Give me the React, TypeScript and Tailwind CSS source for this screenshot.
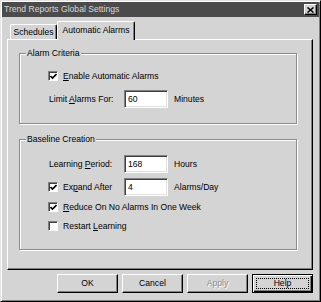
import React from 'react';

const font = "font-['Liberation_Sans',Arial,sans-serif] text-[8.6px] leading-none text-black";

const Check = ({ checked }: { checked?: boolean }) => (
  <span className="w-[10px] h-[10px] shrink-0 bg-white border border-t-[#808080] border-l-[#808080] border-r-white border-b-white shadow-[inset_1px_1px_0_#404040] flex items-center justify-center">
    {checked && (
      <svg width="7" height="7" viewBox="0 0 7 7">
        <path d="M0.5 3 L2.5 5 L6.5 1" stroke="#000" strokeWidth="1.6" fill="none" />
      </svg>
    )}
  </span>
);

const Field = ({ value }: { value: string }) => (
  <div className="w-[44px] h-[18px] bg-white border border-t-[#808080] border-l-[#808080] border-r-white border-b-white shadow-[inset_1px_1px_0_#404040,inset_-1px_-1px_0_#dfdfdf] flex items-center pl-[3px]">
    {value}
  </div>
);

// label with one underlined mnemonic letter
const Mn = ({ pre = '', u, post = '' }: { pre?: string; u: string; post?: string }) => (
  <span className="whitespace-nowrap">
    {pre}
    <span className="underline underline-offset-[1px]">{u}</span>
    {post}
  </span>
);

const GroupBox = ({ title, className, children }: { title: string; className: string; children: React.ReactNode }) => (
  <div className={`relative border border-[#8c8c8c] shadow-[inset_1px_1px_0_#fff,1px_1px_0_#fff] ${className}`}>
    <span className="absolute -top-[5px] left-[6px] bg-[#d4d4d4] px-[1px]">{title}</span>
    {children}
  </div>
);

const Button = ({ label, disabled, isDefault }: { label: string; disabled?: boolean; isDefault?: boolean }) => (
  <div
    className={`w-[61px] h-[19px] flex items-center justify-center ${
      isDefault
        ? 'border border-black shadow-[inset_1px_1px_0_#fff,inset_-1px_-1px_0_#000,inset_-2px_-2px_0_#808080]'
        : 'border border-t-white border-l-white border-r-black border-b-black shadow-[inset_-1px_-1px_0_#808080]'
    }`}
  >
    {isDefault ? (
      <span className="w-[53px] h-[11px] border border-dotted border-black flex items-center justify-center">{label}</span>
    ) : (
      <span className={disabled ? 'text-[#8a8a8a] [text-shadow:1px_1px_0_#fff]' : ''}>{label}</span>
    )}
  </div>
);

export default function App() {
  return (
    <div className={`${font} w-[321px] h-[302px] bg-[#d4d4d4] border border-t-[#e4e4e4] border-l-[#e4e4e4] border-r-black border-b-black shadow-[inset_1px_1px_0_#fff,inset_-1px_-1px_0_#808080] p-[1px] flex flex-col`}>
      {/* title bar */}
      <div className="h-[15px] bg-[#4b4b4b] flex items-center justify-between pl-[2px] pr-[2px]">
        <span className="text-[#dadada]">Trend Reports Global Settings</span>
        <div className="w-[13px] h-[11px] bg-[#d4d4d4] border border-t-white border-l-white border-r-black border-b-black shadow-[inset_-1px_-1px_0_#808080] flex items-center justify-center">
          <svg width="7" height="6" viewBox="0 0 7 6">
            <path d="M0.5 0.5 L6.5 5.5 M6.5 0.5 L0.5 5.5" stroke="#000" strokeWidth="1.5" />
          </svg>
        </div>
      </div>

      <div className="ml-[5px] mr-[6px] mt-[4px] flex flex-col">
        {/* tabs */}
        <div className="relative z-10 -mb-[1px] flex items-end h-[19px] pl-[3px]">
          <div className="w-[47px] h-[15px] mb-[1px] border-t border-l border-t-white border-l-white border-r border-r-black rounded-t-[2px] shadow-[inset_-1px_0_0_#808080] flex items-center justify-center pt-[1px]">
            Schedules
          </div>
          <div className="w-[78px] h-[19px] bg-[#d4d4d4] border-t border-l border-t-white border-l-white border-r border-r-black rounded-t-[2px] shadow-[inset_-1px_0_0_#808080] flex items-center justify-center pb-[2px]">
            Automatic Alarms
          </div>
        </div>

        {/* panel */}
        <div className="h-[231px] border border-t-white border-l-white border-r-black border-b-black shadow-[inset_-1px_-1px_0_#808080] pl-[11px] pr-[15px] pt-[13px] flex flex-col">
          <GroupBox title="Alarm Criteria" className="h-[71px] pl-[28px] pt-[17px] flex flex-col">
            <div className="flex items-center h-[10px] gap-[5px]">
              <Check checked />
              <Mn u="E" post="nable Automatic Alarms" />
            </div>
            <div className="flex items-center mt-[9px]">
              <div className="w-[76px] pl-[1px]">
                <Mn pre="Limit " u="A" post="larms For:" />
              </div>
              <Field value="60" />
              <span className="ml-[6px]">Minutes</span>
            </div>
          </GroupBox>

          <GroupBox title="Baseline Creation" className="mt-[15px] h-[111px] pl-[28px] pt-[15px] flex flex-col">
            <div className="flex items-center">
              <div className="w-[76px] pl-[1px]">
                <Mn pre="Learning " u="P" post="eriod:" />
              </div>
              <Field value="168" />
              <span className="ml-[6px]">Hours</span>
            </div>
            <div className="flex items-center mt-[5px]">
              <div className="w-[76px] flex items-center gap-[5px]">
                <Check checked />
                <Mn pre="Ex" u="p" post="and After" />
              </div>
              <Field value="4" />
              <span className="ml-[6px]">Alarms/Day</span>
            </div>
            <div className="flex items-center h-[10px] gap-[5px] mt-[6px]">
              <Check checked />
              <Mn u="R" post="educe On No Alarms In One Week" />
            </div>
            <div className="flex items-center h-[10px] gap-[5px] mt-[9px]">
              <Check />
              <Mn pre="Restart " u="L" post="earning" />
            </div>
          </GroupBox>
        </div>

        {/* buttons */}
        <div className="mt-[4px] flex justify-end gap-[4px]">
          <Button label="OK" />
          <Button label="Cancel" />
          <Button label="Apply" disabled />
          <Button label="Help" isDefault />
        </div>
      </div>
    </div>
  );
}
